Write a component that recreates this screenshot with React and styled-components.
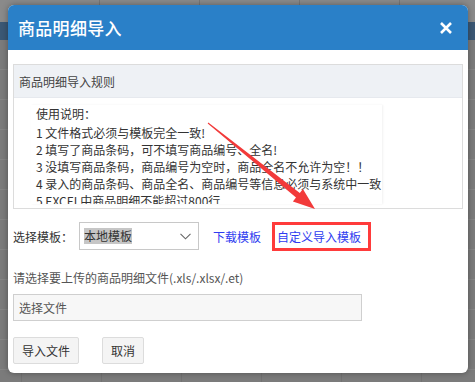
import React from 'react';
import styled, { createGlobalStyle } from 'styled-components';

const GlobalStyle = createGlobalStyle`
  html, body {
    margin: 0;
    padding: 0;
    background: #7d7d7d;
  }
  body {
    font-family: "Noto Sans CJK SC", "Noto Sans", "Liberation Sans", sans-serif;
    font-size: 12px;
    color: #333;
  }
`;

const Screen = styled.div`
  position: relative;
  width: 475px;
  height: 382px;
  overflow: hidden;
`;

// dimmed page behind the dialog
const Backdrop = styled.div`
  display: flex;
  flex-direction: column;
  width: 100%;
  height: 100%;
  background: #7b7b7b;
`;

const BackTopRow = styled.div`
  height: 22px;
  background: #8a8a8a;
  background-image: repeating-linear-gradient(
    90deg,
    transparent 0 99px,
    #777 99px 100px
  );
`;

const BackBar = styled.div`
  height: 18px;
  background: #3b5875;
`;

const BackGrid = styled.div`
  flex: 1;
  background-color: #7b7b7b;
  background-image:
    repeating-linear-gradient(180deg, transparent 0 29px, #858585 29px 30px),
    repeating-linear-gradient(90deg, transparent 0 21px, #727272 21px 22px, transparent 22px 80px);
`;

const Modal = styled.div`
  position: absolute;
  left: 8px;
  top: 5px;
  width: 460px;
  height: 368px;
  display: flex;
  flex-direction: column;
  background: #fff;
  border-radius: 6px;
  overflow: hidden;
  box-shadow: 0 0 6px rgba(0, 0, 0, 0.35);
`;

const Header = styled.div`
  height: 45px;
  flex: none;
  display: flex;
  align-items: center;
  justify-content: space-between;
  padding: 0 16px 0 10px;
  background: #2a80c8;
  color: #fff;
`;

const Title = styled.h1`
  margin: 0;
  font-size: 17px;
  font-weight: 500;
  letter-spacing: 0.3px;
`;

const Close = styled.button`
  display: flex;
  padding: 0;
  border: none;
  background: none;
  cursor: pointer;
`;

const Body = styled.div`
  display: flex;
  flex-direction: column;
  padding: 14px 5px 11px;
`;

const Panel = styled.section`
  border: 1px solid #dcdcdc;
`;

const PanelHeader = styled.div`
  height: 32px;
  display: flex;
  align-items: center;
  padding-left: 5px;
  background: #eef1f5;
  border-bottom: 1px solid #e6e9ee;
  color: #444;
`;

const PanelBody = styled.div`
  padding: 7px 0 4px 17px;
`;

const RuleBox = styled.div`
  width: 346px;
  height: 99px;
  padding-left: 5px;
  overflow: hidden;
  box-shadow: 1px 0 2px rgba(0, 0, 0, 0.06);
  line-height: 17px;
  color: #333;
  white-space: nowrap;
`;

const RuleLine = styled.div`
  margin-bottom: ${({ $gap }) => ($gap ? 2 : 0)}px;
`;

const TemplateRow = styled.div`
  display: flex;
  align-items: center;
  margin-top: 12px;
  height: 30px;
`;

const Label = styled.span`
  width: 66px;
  color: #333;
`;

const Select = styled.div`
  box-sizing: border-box;
  width: 120px;
  height: 28px;
  display: flex;
  align-items: center;
  justify-content: space-between;
  padding: 0 7px 0 4px;
  border: 1px solid #c8c8c8;
  background: #fff;
`;

const Selected = styled.span`
  background: #c6c6c6;
  color: #333;
  line-height: 16px;
`;

const Link = styled.a`
  color: #2f3cf0;
  text-decoration: none;
  margin-left: ${({ $ml }) => $ml}px;
`;

const Highlight = styled.span`
  display: flex;
  align-items: center;
  height: 29px;
  box-sizing: border-box;
  margin-left: 11px;
  padding: 0 7px 0 2px;
  border: 3px solid #ff3b3b;
`;

const Hint = styled.div`
  margin-top: 18px;
  line-height: 17px;
  color: #555;
`;

const FileBox = styled.div`
  box-sizing: border-box;
  width: 349px;
  height: 27px;
  margin-top: 8px;
  display: flex;
  align-items: center;
  padding-left: 5px;
  border: 1px solid #cfcfcf;
  background: #f7f7f7;
  color: #555;
`;

const Actions = styled.div`
  display: flex;
  gap: 23px;
  margin-top: 16px;
`;

const Button = styled.button`
  box-sizing: border-box;
  height: 27px;
  padding: 0 8px;
  border: 1px solid #dcdcdc;
  border-radius: 2px;
  background: #f4f4f4;
  color: #333;
  font: inherit;
  font-size: 12px;
`;

const Arrow = styled.svg`
  position: absolute;
  left: 0;
  top: 0;
  pointer-events: none;
`;

const rules = [
  '1 文件格式必须与模板完全一致!',
  '2 填写了商品条码，可不填写商品编号、全名!',
  '3 没填写商品条码，商品编号为空时，商品全名不允许为空！！',
  '4 录入的商品条码、商品全名、商品编号等信息必须与系统中一致',
  '5 EXCEL中商品明细不能超过800行',
];

export default function App() {
  return (
    <Screen>
      <GlobalStyle />
      <Backdrop>
        <BackTopRow />
        <BackBar />
        <BackGrid />
      </Backdrop>
      <Modal>
        <Header>
          <Title>商品明细导入</Title>
          <Close aria-label="关闭">
            <svg width="12" height="12" viewBox="0 0 12 12">
              <path d="M1 1L11 11M11 1L1 11" stroke="#fff" strokeWidth="2.6" />
            </svg>
          </Close>
        </Header>
        <Body>
          <Panel>
            <PanelHeader>商品明细导入规则</PanelHeader>
            <PanelBody>
              <RuleBox>
                <RuleLine $gap>使用说明：</RuleLine>
                {rules.map(r => (
                  <RuleLine key={r}>{r}</RuleLine>
                ))}
              </RuleBox>
            </PanelBody>
          </Panel>
          <TemplateRow>
            <Label>选择模板：</Label>
            <Select>
              <Selected>本地模板</Selected>
              <svg width="11" height="7" viewBox="0 0 11 7">
                <path d="M0.5 0.8L5.5 5.8L10.5 0.8" fill="none" stroke="#666" strokeWidth="1.1" />
              </svg>
            </Select>
            <Link href="#" $ml={14}>下载模板</Link>
            <Highlight>
              <Link href="#" $ml={0}>自定义导入模板</Link>
            </Highlight>
          </TemplateRow>
          <Hint>请选择要上传的商品明细文件(.xls/.xlsx/.et)</Hint>
          <FileBox>选择文件</FileBox>
          <Actions>
            <Button>导入文件</Button>
            <Button>取消</Button>
          </Actions>
        </Body>
      </Modal>
      <Arrow width="475" height="382" viewBox="0 0 475 382">
        <polygon
          points="208.3,122.6 299.8,192.9 302.9,189 315,209 292.9,201.4 296,197.5 207.7,123.4"
          fill="#f23a3a"
        />
      </Arrow>
    </Screen>
  );
}
